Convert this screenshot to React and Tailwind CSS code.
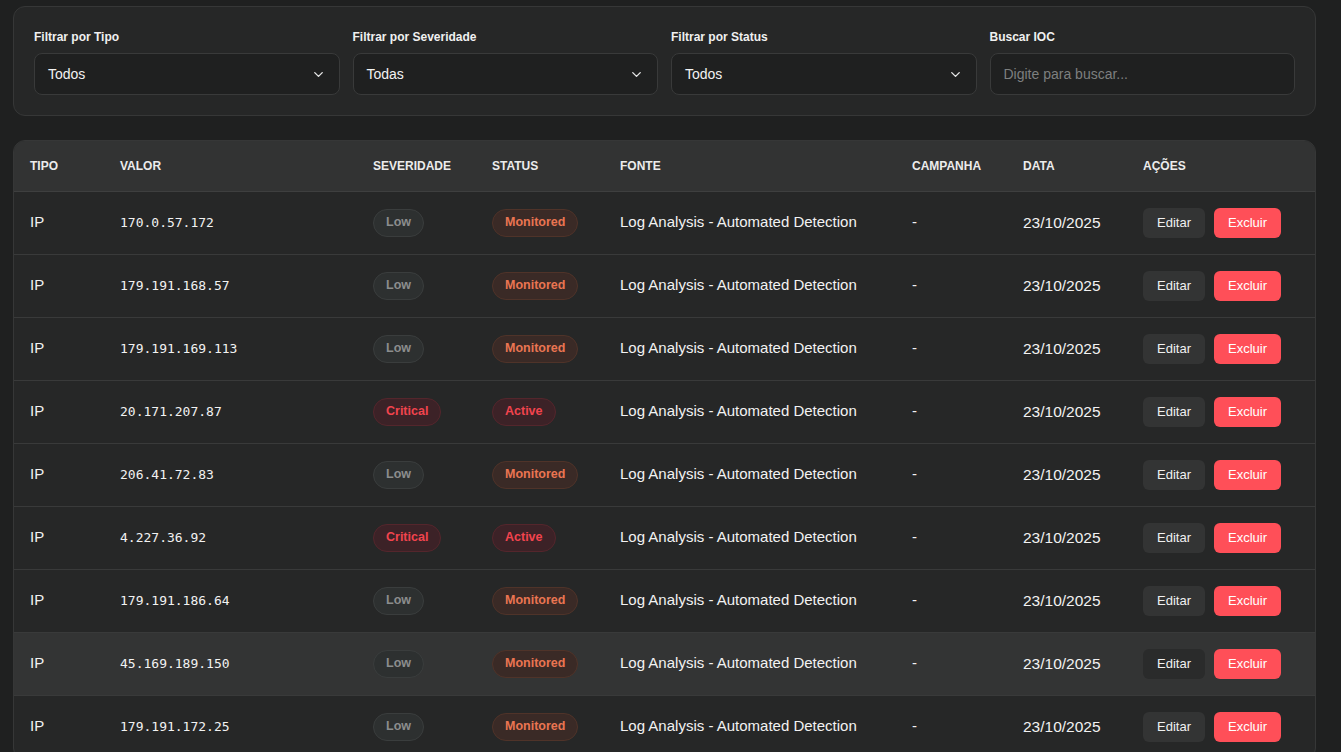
import React from "react";
import { ChevronDown } from "lucide-react";

const rows = [
  { ip: "170.0.57.172", sev: "Low", status: "Monitored" },
  { ip: "179.191.168.57", sev: "Low", status: "Monitored" },
  { ip: "179.191.169.113", sev: "Low", status: "Monitored" },
  { ip: "20.171.207.87", sev: "Critical", status: "Active" },
  { ip: "206.41.72.83", sev: "Low", status: "Monitored" },
  { ip: "4.227.36.92", sev: "Critical", status: "Active" },
  { ip: "179.191.186.64", sev: "Low", status: "Monitored" },
  { ip: "45.169.189.150", sev: "Low", status: "Monitored", hover: true },
  { ip: "179.191.172.25", sev: "Low", status: "Monitored" },
];

const badgeStyles = {
  Low: "bg-[#2d3030] border-[#3a3d3d] text-[#8b8d8d]",
  Critical: "bg-[#3c2227] border-[#54262c] text-[#f2444e]",
  Active: "bg-[#3c2227] border-[#54262c] text-[#f2444e]",
  Monitored: "bg-[#3a2a26] border-[#4f3329] text-[#ea7552]",
};

function Badge({ label }) {
  return (
    <span className={`inline-flex items-center h-[28px] px-[12px] rounded-full border text-[12.5px] font-semibold ${badgeStyles[label]}`}>
      {label}
    </span>
  );
}

function Select({ value }) {
  return (
    <div className="flex items-center justify-between h-[42px] px-[13px] rounded-lg bg-[#1f2020] border border-[#393a3a] text-[14px] text-[#f2f2f2]">
      <span>{value}</span>
      <ChevronDown size={15} strokeWidth={2.2} className="text-[#e6e6e6]" />
    </div>
  );
}

function Field({ label, children }) {
  return (
    <div className="flex flex-col">
      <label className="text-[12px] font-bold text-[#f0f0f0] mb-[8px] leading-[16px]">{label}</label>
      {children}
    </div>
  );
}

export default function App() {
  return (
    <div className="min-h-screen bg-[#1f2020] px-[13px] pt-[6px] pr-[25px]" style={{ fontFamily: '"Liberation Sans", Arial, sans-serif' }}>
      <div className="rounded-xl bg-[#262727] border border-[#363737] px-[20px] pt-[22px] pb-[20px] grid grid-cols-4 gap-[13px]">
        <Field label="Filtrar por Tipo"><Select value="Todos" /></Field>
        <Field label="Filtrar por Severidade"><Select value="Todas" /></Field>
        <Field label="Filtrar por Status"><Select value="Todos" /></Field>
        <Field label="Buscar IOC">
          <input
            placeholder="Digite para buscar..."
            className="h-[42px] px-[13px] rounded-lg bg-[#1f2020] border border-[#393a3a] text-[14px] text-[#f2f2f2] placeholder:text-[#7d7f7f] outline-none"
          />
        </Field>
      </div>

      <div className="mt-[24px] rounded-xl bg-[#262727] border border-[#363737] overflow-hidden">
        <table className="w-full table-fixed border-collapse text-left">
          <colgroup>
            <col className="w-[90px]" />
            <col className="w-[253px]" />
            <col className="w-[119px]" />
            <col className="w-[128px]" />
            <col className="w-[292px]" />
            <col className="w-[111px]" />
            <col className="w-[120px]" />
            <col />
          </colgroup>
          <thead>
            <tr className="bg-[#323333] h-[50px] border-b border-[#3e3f3f]">
              {["TIPO", "VALOR", "SEVERIDADE", "STATUS", "FONTE", "CAMPANHA", "DATA", "AÇÕES"].map((h) => (
                <th key={h} className="px-[16px] text-[12px] font-bold text-[#ececec]">{h}</th>
              ))}
            </tr>
          </thead>
          <tbody>
            {rows.map((r) => (
              <tr key={r.ip} className={`h-[63px] border-b border-[#393a3a] ${r.hover ? "bg-[#333434]" : ""}`}>
                <td className="px-[16px] text-[15px] text-[#f2f2f2]">IP</td>
                <td className="px-[16px] text-[13px] text-[#f2f2f2]" style={{ fontFamily: '"DejaVu Sans Mono", monospace' }}>{r.ip}</td>
                <td className="px-[16px]"><Badge label={r.sev} /></td>
                <td className="px-[16px]"><Badge label={r.status} /></td>
                <td className="px-[16px] text-[15px] text-[#f2f2f2] whitespace-nowrap">Log Analysis - Automated Detection</td>
                <td className="px-[16px] text-[15px] text-[#f2f2f2]">-</td>
                <td className="px-[16px] text-[15.5px] text-[#f2f2f2]">23/10/2025</td>
                <td className="px-[16px]">
                  <div className="flex gap-[9px]">
                    <button className={`h-[30px] px-[14px] rounded-md text-[13px] text-[#f0f0f0] ${r.hover ? "bg-[#2a2b2b]" : "bg-[#333434]"}`}>Editar</button>
                    <button className="h-[30px] px-[14px] rounded-md bg-[#ff4f58] text-[13px] text-white">Excluir</button>
                  </div>
                </td>
              </tr>
            ))}
          </tbody>
        </table>
      </div>
    </div>
  );
}
